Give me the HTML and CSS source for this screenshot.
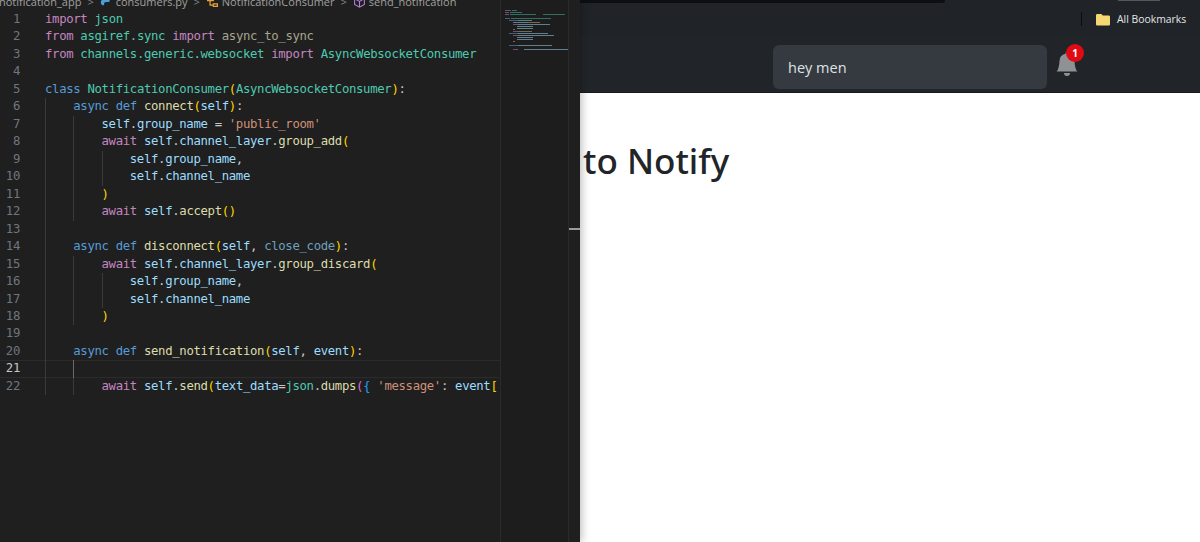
FILE: index.html
```html
<!DOCTYPE html>
<html lang="en">
<head>
  <meta charset="UTF-8" />
  <meta name="viewport" content="width=device-width, initial-scale=1" />
  <title>Notification consumer</title>
  <link rel="stylesheet" href="styles.css">
</head>
<body>
  <div class="screen">
    <section class="editor">
      <div class="crumbs">
        <span>notification_app</span>
        <span class="sep">&gt;</span>
        <svg class="crumb-icon" viewBox="0 0 16 16"><path d="M8 1C5 1 5 2.300 5 4v1h4v1H3.500C2 6 1 7 1 9s1 3.500 2.500 3.500H5V11c0-1.500 1-2.500 2.500-2.500h3C12 8.500 12 7.500 12 6V3.500C12 2 10.500 1 8 1z" fill="#4b9fd8"/></svg>
        <span>consumers.py</span>
        <span class="sep">&gt;</span>
        <svg class="crumb-icon" viewBox="0 0 16 16"><path d="M2 3h7v4H2zM9 11h5v3H9zM5 7v5.500h4" fill="none" stroke="#e8a33d" stroke-width="1.500"/></svg>
        <span>NotificationConsumer</span>
        <span class="sep">&gt;</span>
        <svg class="crumb-icon" viewBox="0 0 16 16"><path d="M8 1l6 3.500v7L8 15l-6-3.500v-7zM2 4.500L8 8l6-3.500M8 8v7" fill="none" stroke="#b180d7" stroke-width="1.300"/></svg>
        <span>send_notification</span>
      </div>

      <div class="editor-body">
        <div class="code">
          <div class="line"><span class="num">1</span><span class="src"><span class="kw">import</span> <span class="mod">json</span></span></div>
          <div class="line"><span class="num">2</span><span class="src"><span class="kw">from</span> <span class="mod">asgiref.sync</span> <span class="kw">import</span> <span class="fade">async_to_sync</span></span></div>
          <div class="line"><span class="num">3</span><span class="src"><span class="kw">from</span> <span class="mod">channels.generic.websocket</span> <span class="kw">import</span> <span class="mod">AsyncWebsocketConsumer</span></span></div>
          <div class="line"><span class="num">4</span><span class="src"></span></div>
          <div class="line"><span class="num">5</span><span class="src"><span class="def">class</span> <span class="mod">NotificationConsumer</span><span class="br">(</span><span class="mod">AsyncWebsocketConsumer</span><span class="br">)</span>:</span></div>
          <div class="line"><span class="num">6</span><span class="src"><span class="guide"></span><span class="def">async def</span> <span class="fn">connect</span><span class="br">(</span><span class="var">self</span><span class="br">)</span>:</span></div>
          <div class="line"><span class="num">7</span><span class="src"><span class="guide"></span><span class="guide"></span><span class="var">self</span>.<span class="var">group_name</span> = <span class="str">'public_room'</span></span></div>
          <div class="line"><span class="num">8</span><span class="src"><span class="guide"></span><span class="guide"></span><span class="kw">await</span> <span class="var">self</span>.<span class="var">channel_layer</span>.<span class="fn">group_add</span><span class="br">(</span></span></div>
          <div class="line"><span class="num">9</span><span class="src"><span class="guide"></span><span class="guide"></span><span class="guide"></span><span class="var">self</span>.<span class="var">group_name</span>,</span></div>
          <div class="line"><span class="num">10</span><span class="src"><span class="guide"></span><span class="guide"></span><span class="guide"></span><span class="var">self</span>.<span class="var">channel_name</span></span></div>
          <div class="line"><span class="num">11</span><span class="src"><span class="guide"></span><span class="guide"></span><span class="br">)</span></span></div>
          <div class="line"><span class="num">12</span><span class="src"><span class="guide"></span><span class="guide"></span><span class="kw">await</span> <span class="var">self</span>.<span class="fn">accept</span><span class="br">()</span></span></div>
          <div class="line"><span class="num">13</span><span class="src"><span class="guide"></span></span></div>
          <div class="line"><span class="num">14</span><span class="src"><span class="guide"></span><span class="def">async def</span> <span class="fn">disconnect</span><span class="br">(</span><span class="var">self</span>, <span class="fade-var">close_code</span><span class="br">)</span>:</span></div>
          <div class="line"><span class="num">15</span><span class="src"><span class="guide"></span><span class="guide"></span><span class="kw">await</span> <span class="var">self</span>.<span class="var">channel_layer</span>.<span class="fn">group_discard</span><span class="br">(</span></span></div>
          <div class="line"><span class="num">16</span><span class="src"><span class="guide"></span><span class="guide"></span><span class="guide"></span><span class="var">self</span>.<span class="var">group_name</span>,</span></div>
          <div class="line"><span class="num">17</span><span class="src"><span class="guide"></span><span class="guide"></span><span class="guide"></span><span class="var">self</span>.<span class="var">channel_name</span></span></div>
          <div class="line"><span class="num">18</span><span class="src"><span class="guide"></span><span class="guide"></span><span class="br">)</span></span></div>
          <div class="line"><span class="num">19</span><span class="src"><span class="guide"></span></span></div>
          <div class="line"><span class="num">20</span><span class="src"><span class="guide"></span><span class="def">async def</span> <span class="fn">send_notification</span><span class="br">(</span><span class="var">self</span>, <span class="var">event</span><span class="br">)</span>:</span></div>
          <div class="line current"><span class="num">21</span><span class="src"><span class="guide"></span><span class="guide active"></span></span></div>
          <div class="line"><span class="num">22</span><span class="src"><span class="guide"></span><span class="guide"></span><span class="kw">await</span> <span class="var">self</span>.<span class="fn">send</span><span class="br">(</span><span class="var">text_data</span>=<span class="mod">json</span>.<span class="fn">dumps</span><span class="br2">(</span><span class="br3">{</span> <span class="str">'message'</span>: <span class="var">event</span><span class="br">[</span></span></div>
        </div>

        <div class="minimap">
          <svg class="minimap-art" viewBox="4 0 68 60" width="68" height="60">
            <g fill="#8a6a90"><rect x="9" y="10" width="6" height="1"/><rect x="9" y="12" width="4" height="1"/><rect x="9" y="14" width="4" height="1"/></g>
            <g fill="#3f8f80"><rect x="16" y="10" width="5" height="1"/><rect x="14" y="12" width="12" height="1"/><rect x="14" y="14" width="26" height="1"/><rect x="47" y="14" width="22" height="1"/><rect x="15" y="18" width="40" height="1"/></g>
            <g fill="#4d7fa8"><rect x="9" y="18" width="5" height="1"/><rect x="13" y="20" width="9" height="1"/><rect x="13" y="33" width="9" height="1"/><rect x="13" y="45" width="9" height="1"/></g>
            <g fill="#7fa8c0"><rect x="22" y="20" width="14" height="1"/><rect x="17" y="22" width="15" height="1"/><rect x="22" y="24" width="32" height="1"/><rect x="21" y="26" width="16" height="1"/><rect x="21" y="28" width="16" height="1"/><rect x="22" y="33" width="30" height="1"/><rect x="22" y="35" width="36" height="1"/><rect x="21" y="37" width="16" height="1"/><rect x="21" y="39" width="16" height="1"/><rect x="22" y="45" width="34" height="1"/><rect x="28" y="49" width="50" height="1"/></g>
            <g fill="#8a6a90"><rect x="17" y="24" width="5" height="1"/><rect x="17" y="31" width="5" height="1"/><rect x="17" y="35" width="5" height="1"/><rect x="17" y="49" width="5" height="1"/></g>
            <g fill="#a08a60"><rect x="32" y="22" width="12" height="1"/><rect x="17" y="29" width="2" height="1"/><rect x="22" y="31" width="14" height="1"/><rect x="17" y="41" width="2" height="1"/></g>
          </svg>
        </div>

        <div class="scrollbar"><span class="scroll-tick"></span></div>
      </div>
    </section>

    <section class="browser">
      <div class="tabstrip">
        <span class="active-tab"></span>
        <span class="top-pill"></span>
      </div>
      <div class="bookmarks">
        <span class="bm-sep"></span>
        <svg class="folder" viewBox="0 0 16 13"><path d="M1 2.500C1 1.500 1.500 1 2.500 1h3.800l1.500 1.500h5.700c1 0 1.500.5 1.500 1.500v7c0 1-.5 1.500-1.500 1.500h-11C1.500 12.500 1 12 1 11z" fill="#f7d774"/></svg>
        <span class="bm-label">All Bookmarks</span>
      </div>
      <nav class="navbar">
        <input class="notify-input" type="text" value="hey men">
        <div class="bell-wrap">
          <svg class="bell" viewBox="0 0 16 16"><path d="M8 16a2 2 0 0 0 2-2H6a2 2 0 0 0 2 2zm.995-14.901a1 1 0 1 0-1.990 0A5.002 5.002 0 0 0 3 6c0 1.098-.5 6-2 7h14c-1.500-1-2-5.902-2-7 0-2.420-1.720-4.440-4.005-4.901z"/></svg>
          <span class="badge">1</span>
        </div>
      </nav>
      <main class="page">
        <h1>to Notify</h1>
      </main>
    </section>
  </div>
</body>
</html>
```

FILE: styles.css
```css
html, body {
  margin: 0;
  height: 100%;
  overflow: hidden;
  background-color: #fff;
}

.screen {
  display: grid;
  grid-template-columns: 580px 1fr;
  height: 542px;
}

/* editor side */
.editor {
  display: flex;
  flex-direction: column;
  background-color: #1f1f1f;
  box-shadow: 2px 0 8px rgba(0, 0, 0, 0.25);
  position: relative;
  z-index: 1;
  overflow: hidden;
}

.crumbs {
  display: flex;
  align-items: center;
  gap: 6px;
  flex: none;
  height: 8px;
  margin-left: -1px;
  margin-top: -3px;
  padding-bottom: 6px;
  font-family: "Open Sans", "Noto Sans", sans-serif;
  font-size: 11px;
  color: #a0a0a0;
  white-space: nowrap;
}

.crumbs .sep {
  color: #888;
}

.crumb-icon {
  width: 13px;
  height: 13px;
  margin-right: -3px;
  flex: none;
}

.editor-body {
  display: flex;
  flex: 1;
  min-height: 0;
}

.code {
  width: 500px;
  flex: none;
  overflow: hidden;
  font-family: "DejaVu Sans Mono", monospace;
  font-size: 12.3px;
  letter-spacing: -0.335px;
  line-height: 17.48px;
  color: #c8c8c8;
  white-space: nowrap;
}

.line {
  display: flex;
  height: 17.48px;
  box-sizing: border-box;
}

.line.current {
  box-shadow: inset 0 1px 0 #2b2b2b, inset 0 -1px 0 #2b2b2b;
}

.num {
  width: 20px;
  margin-right: 25px;
  flex: none;
  text-align: right;
  color: #6e7681;
}

.current .num {
  color: #c6c6c6;
}

.src {
  display: block;
  width: 452px;
  overflow: hidden;
}

.guide {
  display: inline-block;
  width: 28.28px;
  height: 17.48px;
  box-sizing: border-box;
  border-left: 1px solid #3a3a3a;
  vertical-align: top;
}

.guide.active {
  border-left-color: #6a6a6a;
}

.kw { color: #c586c0; }
.mod { color: #4ec9b0; }
.def { color: #569cd6; }
.fn { color: #dcdcaa; }
.var { color: #9cdcfe; }
.str { color: #ce9178; }
.br { color: #ffd700; }
.br2 { color: #da70d6; }
.br3 { color: #179fff; }
.fade { color: #a5a58d; }
.fade-var { color: #6f9fbd; }

.minimap {
  width: 67px;
  flex: none;
  margin-top: -11px;
  border-left: 1px solid #2a2a2a;
  background-color: #1d1d1d;
  overflow: hidden;
}

.minimap-art {
  display: block;
  margin-left: -1px;
  opacity: 0.7;
  filter: blur(0.4px);
}

.scrollbar {
  flex: 1;
  margin-top: -11px;
  border-left: 1px solid #2a2a2a;
  padding-top: 228px;
}

.scroll-tick {
  display: block;
  height: 2px;
  background-color: #9a9a9a;
}

/* browser side */
.browser {
  display: flex;
  flex-direction: column;
  min-width: 0;
}

.tabstrip {
  display: flex;
  justify-content: space-between;
  height: 3px;
  background-color: #202327;
}

.active-tab {
  width: 365px;
  height: 3px;
  border-radius: 0 0 4px 0;
  background-color: #0d0e12;
}

.top-pill {
  width: 42px;
  height: 1px;
  margin-right: 40px;
  background-color: #55585c;
}

.bookmarks {
  display: flex;
  align-items: center;
  height: 32px;
  padding-left: 501px;
  background-color: #202327;
  color: #e4e6e8;
}

.bm-sep {
  width: 1px;
  height: 14px;
  background-color: #0c0c0c;
}

.folder {
  width: 16px;
  height: 13px;
  margin-left: 13px;
}

.bm-label {
  margin-left: 6px;
  font-family: "Open Sans", "Noto Sans", sans-serif;
  font-size: 10.4px;
  white-space: nowrap;
}

.navbar {
  display: flex;
  align-items: flex-start;
  height: 58px;
  box-sizing: border-box;
  padding: 10px 0 0 193px;
  background-color: #212529;
  border-bottom: 1px solid #17191c;
}

.notify-input {
  width: 274px;
  height: 44px;
  box-sizing: border-box;
  padding: 0 15px;
  border: none;
  border-radius: 6px;
  background-color: #343a40;
  color: #dee2e6;
  font-family: "Open Sans", "Noto Sans", sans-serif;
  font-size: 14.5px;
}

.bell-wrap {
  position: relative;
  margin: 7px 0 0 8px;
  width: 24px;
  height: 24px;
}

.bell {
  display: block;
  width: 24px;
  height: 24px;
  fill: #8f9294;
}

.badge {
  position: absolute;
  top: -8px;
  left: 11px;
  width: 18px;
  height: 18px;
  border-radius: 50%;
  background-color: #e00a12;
  color: #fff;
  font-family: "Open Sans", "Noto Sans", sans-serif;
  font-size: 10px;
  font-weight: 700;
  line-height: 18px;
  text-align: center;
}

.page {
  flex: 1;
  padding: 45px 0 0 3px;
  background-color: #fff;
}

.page h1 {
  margin: 0;
  font-family: "Noto Sans", "Open Sans", sans-serif;
  font-size: 35px;
  font-weight: 500;
  line-height: 46px;
  color: #212529;
}
```
